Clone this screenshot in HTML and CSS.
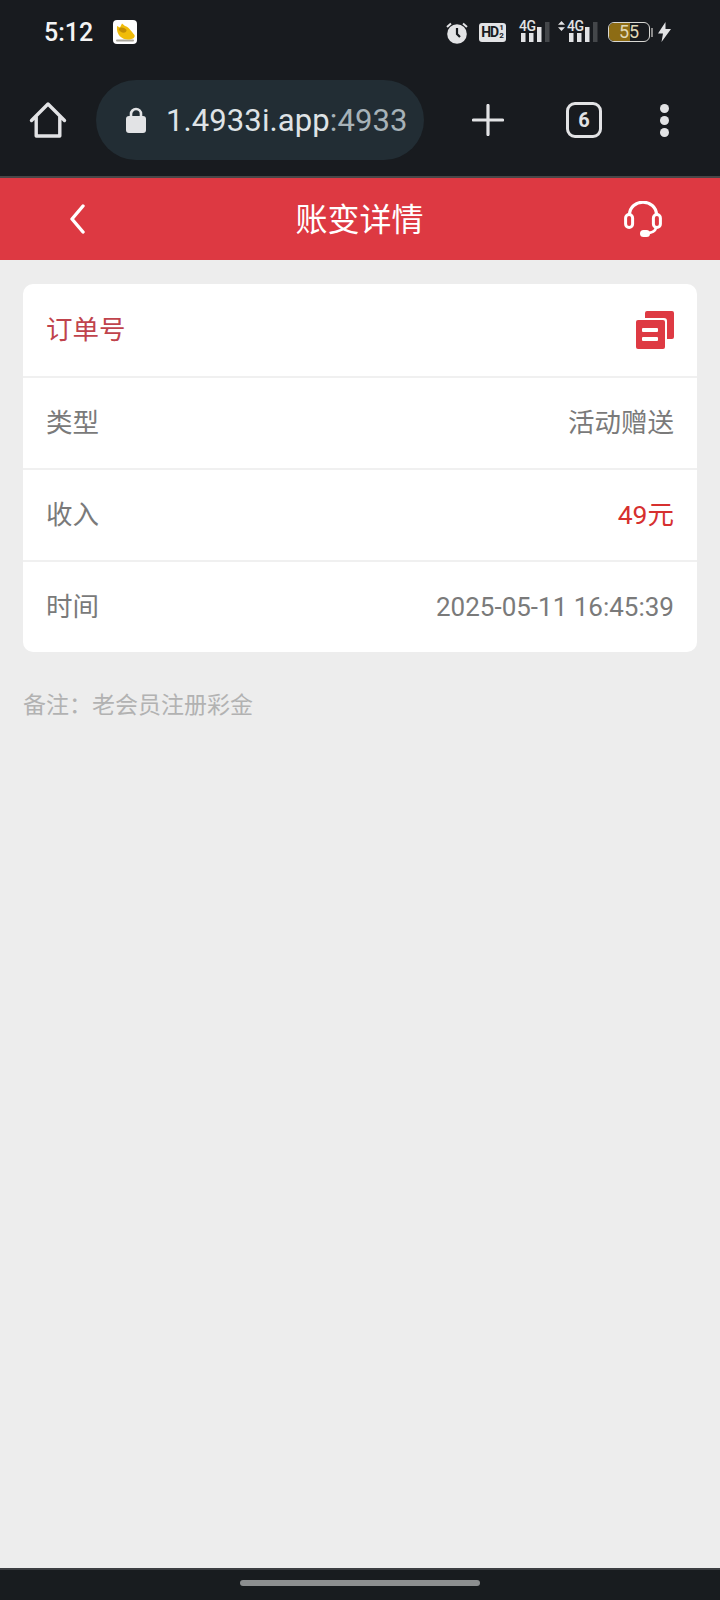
FILE: index.html
```html
<!DOCTYPE html>
<html lang="zh-CN">
<head>
    <meta charset="UTF-8">
    <meta name="viewport" content="width=device-width, initial-scale=1.0">
    <title>账变详情</title>
    <link rel="stylesheet" href="styles.css">
</head>
<body>

<div class="phone">
    <div class="browser-chrome">
        <div class="status-bar">
            <div class="status-left">
                <span class="clock">5:12</span>
                <svg class="app-icon" width="24" height="24" viewBox="0 0 24 24">
                    <rect width="24" height="24" rx="4" fill="#fff"/>
                    <rect x="3" y="19.5" width="18" height="2" rx="1" fill="#a8a59a"/>
                    <path d="M4 6 L7 7.5 L9 3.5 L12 6 C16 7 18 11 21.5 15 C22.5 18 19 19.5 15 19.5 C9 19.5 3 15 4 6 Z" fill="#f0bc0a"/>
                    <path d="M5.5 9 C7 6.5 12 7 13.5 10 C14 13 8 14.5 5.5 9 Z" fill="#c48f06"/>
                </svg>
            </div>
            <div class="status-right">
                <svg class="alarm" width="22" height="23" viewBox="0 0 22 23">
                    <circle cx="11" cy="13" r="9.8" fill="#e2e3e5"/>
                    <path d="M11 7 V13 L14 16" fill="none" stroke="#181b1f" stroke-width="2.2"/>
                    <path d="M1 6 L5 2.5 M21 6 L17 2.5" stroke="#e2e3e5" stroke-width="2"/>
                </svg>
                <span class="hd-badge"><b>HD</b><i>1<br>2</i></span>
                <span class="signal">
                    <span class="net">4G</span>
                    <svg class="bars" width="29" height="20" viewBox="0 0 29 20">
                        <rect x="0" y="11" width="4.5" height="9" fill="#e2e3e5"/>
                        <rect x="8" y="11" width="4.5" height="9" fill="#e2e3e5"/>
                        <rect x="16" y="5" width="4.5" height="15" fill="#e2e3e5"/>
                        <rect x="24" y="0" width="4.5" height="20" fill="#44474a"/>
                    </svg>
                </span>
                <span class="signal signal-data">
                    <svg class="arrows" width="7" height="10" viewBox="0 0 7 10">
                        <path d="M3.5 0 L7 3.8 H0 Z M0 6.2 H7 L3.5 10 Z" fill="#e2e3e5"/>
                    </svg>
                    <span class="net">4G</span>
                    <svg class="bars" width="29" height="20" viewBox="0 0 29 20">
                        <rect x="0" y="11" width="4.5" height="9" fill="#e2e3e5"/>
                        <rect x="8" y="11" width="4.5" height="9" fill="#e2e3e5"/>
                        <rect x="16" y="5" width="4.5" height="15" fill="#e2e3e5"/>
                        <rect x="24" y="0" width="4.5" height="20" fill="#44474a"/>
                    </svg>
                </span>
                <span class="battery">
                    <span class="battery-body"><span class="battery-level"></span><span class="battery-text">55</span></span>
                    <span class="battery-tip"></span>
                </span>
                <svg class="bolt" width="13" height="20" viewBox="0 0 13 20">
                    <path d="M7.5 0 L0 11.5 H5 L3.5 20 L13 7 H7.5 Z" fill="#e2e3e5"/>
                </svg>
            </div>
        </div>
        <div class="toolbar">
            <svg class="home-icon" width="38" height="38" viewBox="0 0 38 38">
                <path d="M2.5 19.5 L19 3 L35.5 19.5 M7.2 15 V35 H30.8 V15" fill="none" stroke="#e2e3e5" stroke-width="3.4" stroke-linecap="round" stroke-linejoin="round"/>
            </svg>
            <div class="address-bar">
                <svg width="20" height="26" viewBox="0 0 20 26">
                    <path d="M5 11 V7 a5 5 0 0 1 10 0 V11" fill="none" stroke="#e2e3e5" stroke-width="2.6"/>
                    <rect x="0" y="9" width="20" height="17" rx="3" fill="#e2e3e5"/>
                </svg>
                <span class="url"><span class="url-host">1.4933i.app</span>:4933</span>
            </div>
            <svg class="plus-icon" width="32" height="32" viewBox="0 0 32 32">
                <path d="M16 1.5 V30.5 M1.5 16 H30.5" stroke="#e2e3e5" stroke-width="3.2" stroke-linecap="round"/>
            </svg>
            <span class="tab-count">6</span>
            <span class="menu-dots"><i></i><i></i><i></i></span>
        </div>
    </div>

    <header class="page-header">
        <svg class="back-icon" width="16" height="30" viewBox="0 0 16 30">
            <path d="M14 2 L3 15 L14 28" fill="none" stroke="#fff" stroke-width="3.4" stroke-linecap="round" stroke-linejoin="round"/>
        </svg>
        <h1>账变详情</h1>
        <svg class="support-icon" width="38" height="36" viewBox="0 0 38 36">
            <path d="M5.5 14 C5.5 -3 32.5 -3 32.5 14" fill="none" stroke="#fff" stroke-width="3.2"/>
            <rect x="1.6" y="13.5" width="7" height="13" rx="3.5" fill="none" stroke="#fff" stroke-width="3"/>
            <rect x="29.4" y="13.5" width="7" height="13" rx="3.5" fill="none" stroke="#fff" stroke-width="3"/>
            <path d="M32 27 C31 31 27 32 22 32.5" fill="none" stroke="#fff" stroke-width="2.8"/>
            <rect x="16" y="29" width="10" height="7" rx="3.5" fill="#fff"/>
        </svg>
    </header>

    <main class="content">
        <div class="card">
            <div class="row">
                <span class="order-label">订单号</span>
                <svg class="copy-icon" width="38" height="38" viewBox="0 0 38 38">
                    <path d="M9 2 a2 2 0 0 1 2 -2 H36 a2 2 0 0 1 2 2 V26 a2 2 0 0 1 -2 2 H31 V10 a3 3 0 0 0 -3 -3 H9 Z" fill="#de3a43"/>
                    <rect x="0" y="9" width="29" height="29" rx="2" fill="#de3a43"/>
                    <rect x="6" y="17" width="16" height="4" rx="1" fill="#fff"/>
                    <rect x="6" y="26" width="16" height="4" rx="1" fill="#fff"/>
                </svg>
            </div>
            <div class="row">
                <span>类型</span>
                <span>活动赠送</span>
            </div>
            <div class="row">
                <span>收入</span>
                <span class="income">49元</span>
            </div>
            <div class="row">
                <span>时间</span>
                <span class="time-value">2025-05-11 16:45:39</span>
            </div>
        </div>
        <p class="note">备注：老会员注册彩金</p>
    </main>

    <div class="nav-bar">
        <span class="home-pill"></span>
    </div>
</div>

</body>
</html>
```

FILE: styles.css
```css
/* page frame */
body {
    margin: 0;
    background-color: #ededed;
    font-family: Roboto, "Noto Sans CJK SC", sans-serif;
}

.phone {
    display: flex;
    flex-direction: column;
    height: 1600px;
}

/* browser chrome */
.browser-chrome {
    height: 176px;
    background-color: #181b1f;
    border-bottom: 2px solid #4a4648;
    color: #e2e3e5;
}

.status-bar {
    display: flex;
    justify-content: space-between;
    align-items: center;
    height: 64px;
    padding: 0 49px 0 44px;
}

.status-left {
    display: flex;
    align-items: center;
    gap: 20px;
}

.clock {
    font-size: 25px;
    font-weight: 500;
    color: #f4f4f4;
}

.status-right {
    display: flex;
    align-items: center;
}

.hd-badge {
    display: flex;
    align-items: center;
    justify-content: center;
    width: 27px;
    height: 19px;
    margin-left: 11px;
    background-color: #e2e3e5;
    border-radius: 3px;
    color: #181b1f;
    font-size: 14px;
    letter-spacing: -1px;
}

.hd-badge i {
    font-size: 8px;
    font-style: normal;
    font-weight: 700;
    line-height: 8px;
    margin-left: 1px;
    letter-spacing: 0;
    text-align: center;
}

.signal {
    display: flex;
    position: relative;
    height: 20px;
    margin-left: 13px;
}

.signal .net {
    position: absolute;
    top: -2px;
    left: 0;
    font-size: 14px;
    font-weight: 500;
    line-height: 13px;
    letter-spacing: -0.5px;
}

.bars {
    margin-left: 2px;
}

.signal-data {
    margin-left: 8px;
}

.signal-data .net {
    left: 9px;
}

.signal-data .bars {
    margin-left: 4px;
}

.arrows {
    margin-top: -1px;
}

.battery {
    display: flex;
    align-items: center;
    margin-left: 10px;
}

.battery-body {
    position: relative;
    box-sizing: border-box;
    width: 42px;
    height: 20px;
    border: 1.5px solid #d8d8d4;
    border-radius: 6px;
    overflow: hidden;
}

.battery-level {
    display: block;
    width: 21px;
    height: 100%;
    background-color: #8d6c14;
}

.battery-text {
    position: absolute;
    top: 0;
    left: 10px;
    font-size: 18px;
    line-height: 17px;
    color: #e0d8b8;
}

.battery-tip {
    width: 2px;
    height: 9px;
    margin-left: 1px;
    background-color: #8a8a8a;
}

.bolt {
    margin-left: 5px;
}

.toolbar {
    display: flex;
    align-items: center;
    height: 112px;
}

.home-icon {
    margin-left: 29px;
}

.address-bar {
    display: flex;
    align-items: center;
    gap: 20px;
    box-sizing: border-box;
    width: 328px;
    height: 80px;
    margin-left: 29px;
    padding-left: 30px;
    background-color: #222d34;
    border-radius: 40px;
    font-size: 31px;
    letter-spacing: 0.1px;
    color: #a7b2b8;
}

.url-host {
    color: #dfe3e6;
}

.plus-icon {
    margin-left: 48px;
}

.tab-count {
    display: flex;
    align-items: center;
    justify-content: center;
    box-sizing: border-box;
    width: 36px;
    height: 36px;
    margin-left: 62px;
    border: 3.5px solid #e2e3e5;
    border-radius: 9px;
    font-size: 20px;
    font-weight: 700;
}

.menu-dots {
    display: flex;
    flex-direction: column;
    gap: 3px;
    margin-left: 58px;
}

.menu-dots i {
    width: 9px;
    height: 9px;
    border-radius: 50%;
    background-color: #e2e3e5;
}

/* red page header */
.page-header {
    display: grid;
    grid-template-columns: 1fr auto 1fr;
    align-items: center;
    height: 82px;
    padding: 0 58px 0 69px;
    background-color: #dd3942;
}

.page-header h1 {
    margin: 0;
    padding: 0 12px 4px 0;
    font-size: 32px;
    font-weight: 400;
    color: #fff;
}

.support-icon {
    justify-self: end;
}

/* detail card */
.content {
    flex: 1;
    padding: 24px 23px 0;
}

.card {
    background-color: #fff;
    border-radius: 10px;
    overflow: hidden;
}

.row {
    display: flex;
    align-items: center;
    justify-content: space-between;
    height: 92px;
    padding: 0 23px 6px;
    box-sizing: border-box;
    border-top: 2px solid #f0f0f0;
    font-size: 26.5px;
    color: #7a7a7a;
}

.row:first-child {
    border-top: none;
}

.order-label {
    color: #c0434c;
}

.copy-icon,
.time-value {
    margin-top: 6px;
}

.time-value {
    font-size: 26px;
}

.income {
    color: #d6302f;
}

.note {
    margin: 34px 0 0;
    font-size: 23px;
    color: #b2b2b2;
}

/* gesture bar */
.nav-bar {
    display: flex;
    justify-content: center;
    height: 32px;
    padding-top: 10px;
    box-sizing: border-box;
    background-color: #181c1f;
    border-top: 2px solid #3c3e42;
}

.home-pill {
    width: 240px;
    height: 6px;
    border-radius: 3px;
    background-color: #8c8f90;
}
```
